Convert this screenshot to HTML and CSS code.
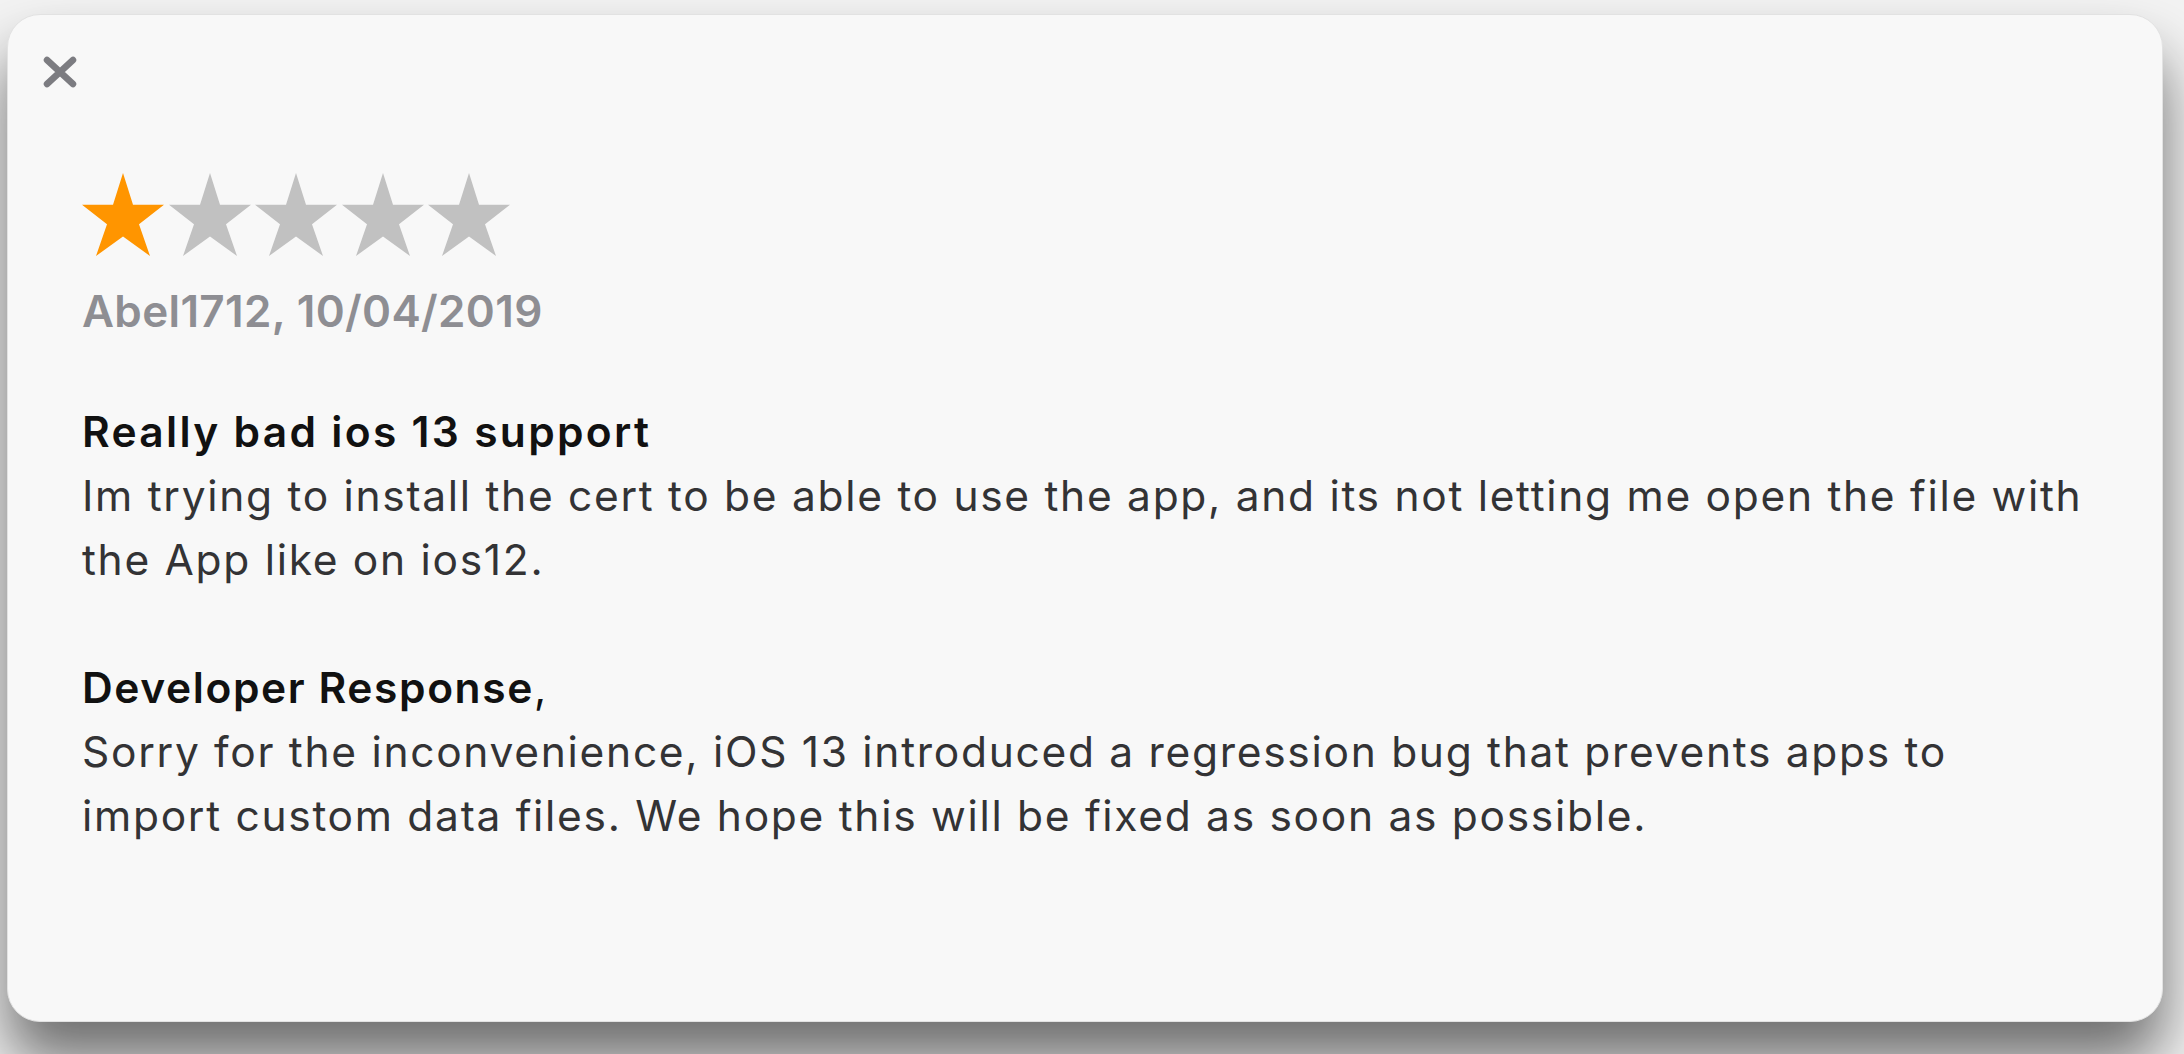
FILE: index.html
```html
<!DOCTYPE html>
<html lang="en">
<head>
<meta charset="utf-8">
<title>Review</title>
<link rel="stylesheet" href="styles.css">
</head>
<body>
<div class="modal">
  <button class="close" aria-label="Close">
    <svg width="34" height="32" viewBox="0 0 34 32"><path d="M4 4 L30 28 M30 4 L4 28" stroke="#7c7c81" stroke-width="6.5" stroke-linecap="round" fill="none"/></svg>
  </button>
  <div class="content">
    <div class="stars">
      <svg class="star on" width="82" height="83" viewBox="0 0 82 83"><polygon points="41,0 51,31.7 82,31.7 57,51.3 68,83 41,63.4 14,83 25,51.3 0,31.7 31,31.7"/></svg>
      <svg class="star" width="82" height="83" viewBox="0 0 82 83"><polygon points="41,0 51,31.7 82,31.7 57,51.3 68,83 41,63.4 14,83 25,51.3 0,31.7 31,31.7"/></svg>
      <svg class="star" width="82" height="83" viewBox="0 0 82 83"><polygon points="41,0 51,31.7 82,31.7 57,51.3 68,83 41,63.4 14,83 25,51.3 0,31.7 31,31.7"/></svg>
      <svg class="star" width="82" height="83" viewBox="0 0 82 83"><polygon points="41,0 51,31.7 82,31.7 57,51.3 68,83 41,63.4 14,83 25,51.3 0,31.7 31,31.7"/></svg>
      <svg class="star" width="82" height="83" viewBox="0 0 82 83"><polygon points="41,0 51,31.7 82,31.7 57,51.3 68,83 41,63.4 14,83 25,51.3 0,31.7 31,31.7"/></svg>
    </div>
    <div class="author">Abel1712, 10/04/2019</div>
    <div class="block">
      <div class="heading"><span class="strong wide">Really bad ios 13 support</span></div>
      <p class="text">Im trying to install the cert to be able to use the app, and its not letting me open the file with<br>the App like on ios12.</p>
    </div>
    <div class="block">
      <div class="heading"><span class="strong">Developer Response</span>,</div>
      <p class="text">Sorry for the inconvenience, iOS 13 introduced a regression bug that prevents apps to<br>import custom data files. We hope this will be fixed as soon as possible.</p>
    </div>
  </div>
</div>
</body>
</html>
```
FILE: styles.css
```css
html, body {
  margin: 0;
  padding: 0;
}
body {
  background: #f3f3f3;
  height: 1054px;
  overflow: hidden;
  font-family: Inter, "Liberation Sans", sans-serif;
}
.modal {
  box-sizing: border-box;
  margin: 14px 21px 0 7px;
  height: 1008px;
  background: #f8f8f8;
  border: 1px solid #e2e2e2;
  border-radius: 33px;
  box-shadow: 0 40px 60px rgba(0, 0, 0, 0.55);
  padding: 41px 40px 0 74px;
  display: flex;
  flex-direction: column;
  align-items: flex-start;
}
.close {
  margin-left: -39px;
  padding: 0;
  border: 0;
  background: none;
  width: 34px;
  height: 32px;
  display: block;
}
.close svg {
  display: block;
}
.content {
  align-self: stretch;
  margin-top: 85px;
}
.stars {
  display: flex;
  gap: 4.5px;
  height: 83px;
}
.star {
  display: block;
  fill: #c1c1c1;
}
.star.on {
  fill: #ff9500;
}
.author {
  margin-top: 27px;
  font-size: 44px;
  line-height: 56px;
  font-weight: 600;
  letter-spacing: 0.35px;
  color: #8e8e93;
}
.block {
  margin-top: 61px;
}
.block + .block {
  margin-top: 64px;
}
.heading {
  font-size: 42.5px;
  line-height: 64px;
  letter-spacing: 1.6px;
  color: #111111;
}
.strong {
  font-weight: 600;
}
.wide {
  letter-spacing: 2.3px;
}
.text {
  margin: 0;
  font-size: 42.5px;
  line-height: 64px;
  letter-spacing: 1.7px;
  color: #333335;
  white-space: nowrap;
}
```
